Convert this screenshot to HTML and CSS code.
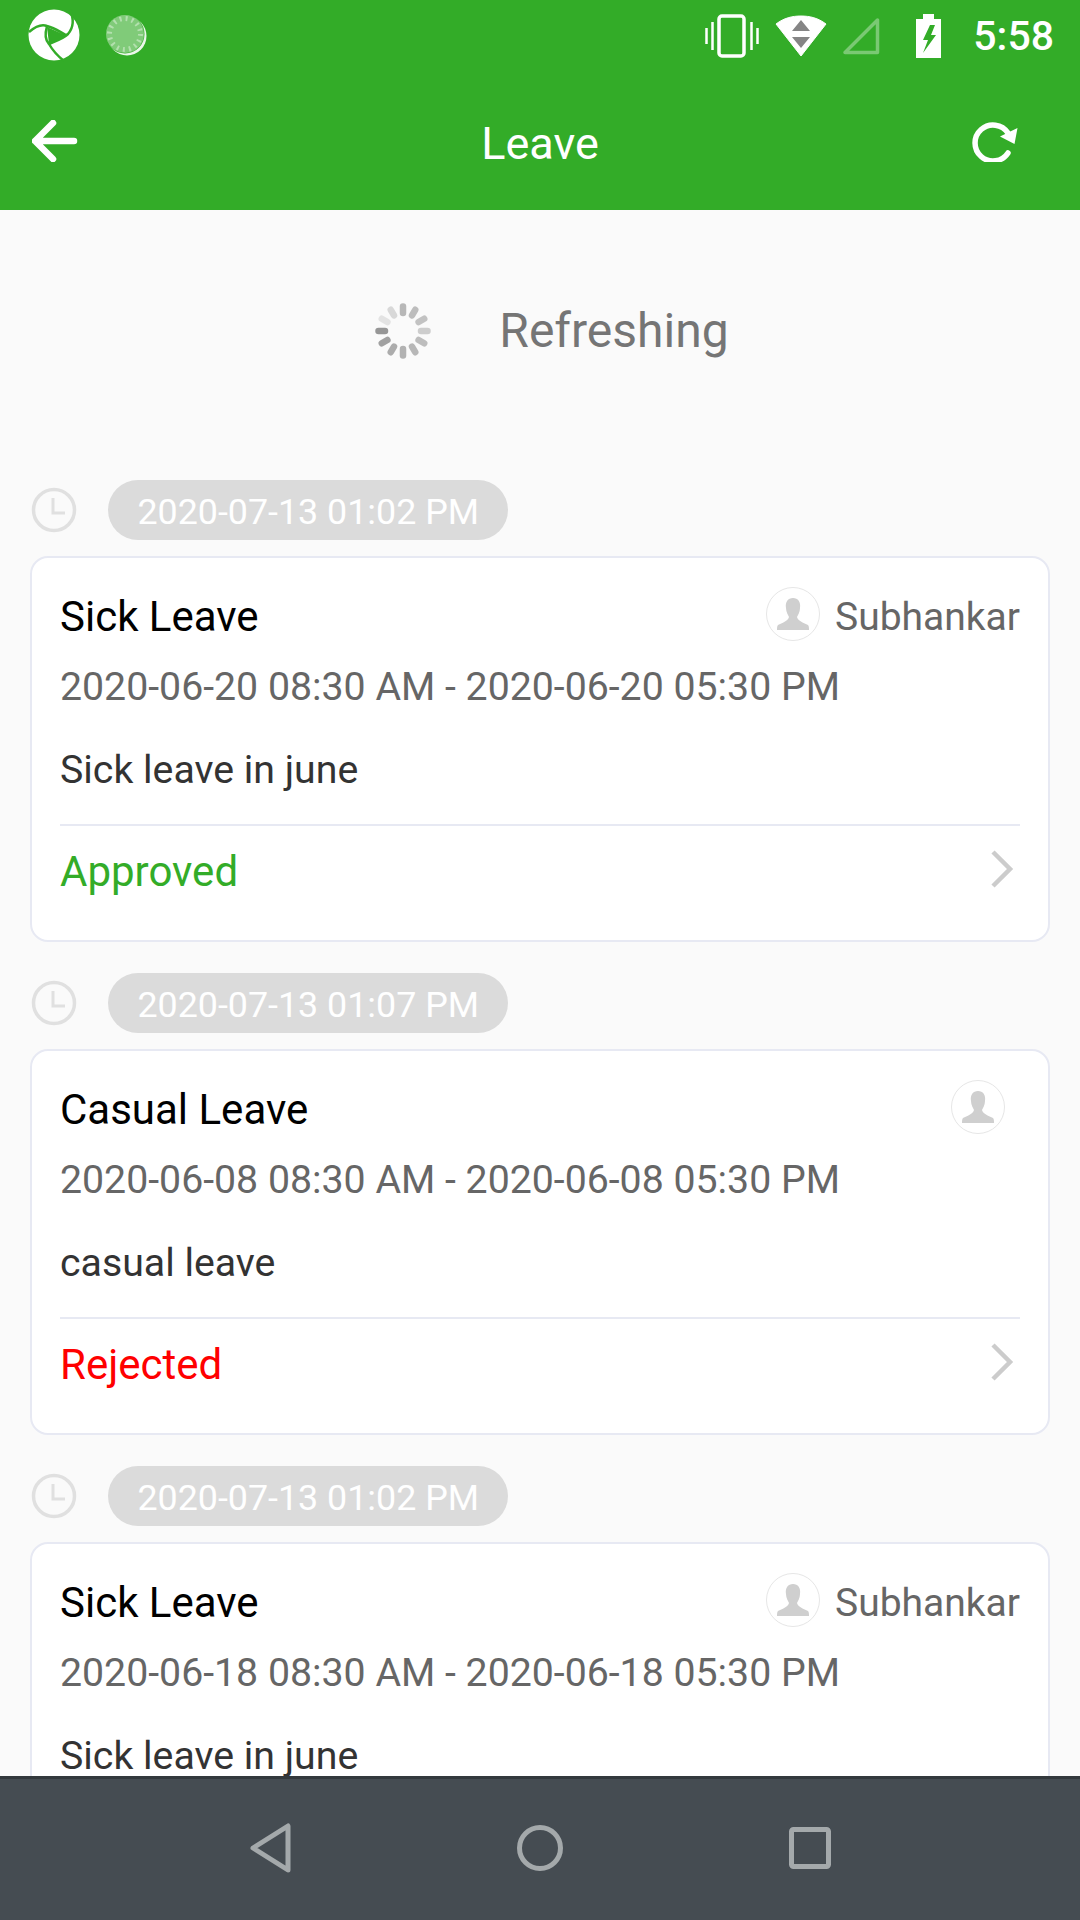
FILE: index.html
```html
<!DOCTYPE html>
<html lang="en">
<head>
<meta charset="utf-8">
<title>Leave</title>
<link rel="stylesheet" href="styles.css">
</head>
<body>
<div class="screen">
  <header class="header">
    <div class="statusbar">
      <svg class="logo" width="54" height="54" viewBox="0 0 54 54"><circle cx="26" cy="26" r="25.5" fill="#fff"/><path d="M1 23C8 17 14 15 19 17C27 19 32 23 38 26M42 1C46 10 46 18 40 25C36 29 30 31 21 35M19 17C17 24 17 31 21 35C25 42 31 48 36 52" fill="none" stroke="#33ac28" stroke-width="2.500"/><path d="M19 18L38 26.500L21 35Z" fill="#33ac28"/></svg>
      <svg class="appicon" width="44" height="44" viewBox="0 0 44 44"><circle cx="23" cy="23" r="19.5" fill="#fff" opacity=".9"/><circle cx="21" cy="21" r="19.5" fill="#33ac28"/><circle cx="21" cy="21" r="19" fill="#fff" opacity=".38"/><circle cx="21" cy="21" r="15.5" fill="none" stroke="#fff" stroke-opacity=".4" stroke-width="5" stroke-dasharray="2 4.1"/></svg>
      <span class="status-spacer"></span>
      <svg class="vibrate" width="54" height="44" viewBox="0 0 54 44"><rect x="14" y="2" width="25" height="40" rx="3" fill="none" stroke="#fff" stroke-width="3.5"/><path d="M1.5 14V30M7.500 8V36M46.500 8V36M52.500 14V30" stroke="#fff" stroke-width="2.500" fill="none"/></svg>
      <svg class="wifi" width="52" height="42" viewBox="0 0 52 42"><path d="M1 9C9 3 17 1 26 1S43 3 51 9L26 41Z" fill="#fff" stroke="#fff" stroke-linejoin="round"/><path d="M26 5L35 16H17ZM17 22H35L26 33Z" fill="#858585"/></svg>
      <svg class="signal" width="38" height="38" viewBox="0 0 38 38"><path d="M3 35.500L35.500 3V35.500Z" fill="none" stroke="#fff" stroke-opacity=".35" stroke-width="3.500" stroke-linejoin="round"/></svg>
      <svg class="battery" width="25" height="44" viewBox="0 0 25 44"><path d="M7 0H18V5H25V44H0V5H7Z" fill="#fff"/><path d="M14 11L7 26H12L7 39L20 21H15L19 11Z" fill="#33ac28"/></svg>
      <span class="clock-time">5:58</span>
    </div>
    <div class="toolbar">
      <svg class="back" width="46" height="42" viewBox="0 0 46 42"><path d="M21 3L3 21L21 39M3 21H42" fill="none" stroke="#fff" stroke-width="6.500" stroke-linecap="round" stroke-linejoin="round"/></svg>
      <h1 class="title">Leave</h1>
      <svg class="reload" width="46" height="42" viewBox="0 0 46 42"><path d="M36 33A18 18 0 1 1 36 13" fill="none" stroke="#fff" stroke-width="5.500" stroke-linecap="round"/><path d="M45.500 8L42.500 24L28 16.500Z" fill="#fff"/></svg>
    </div>
  </header>

  <main class="content">
    <div class="refresh">
      <svg class="spinner" width="60" height="60" viewBox="-30 -30 60 60">
        <g stroke="#8c8c8c" stroke-width="6.500" stroke-linecap="round">
          <line y1="-24.500" y2="-18" opacity=".6"/>
          <line y1="-24.500" y2="-18" opacity=".55" transform="rotate(30)"/>
          <line y1="-24.500" y2="-18" opacity=".5" transform="rotate(60)"/>
          <line y1="-24.500" y2="-18" opacity=".4" transform="rotate(90)"/>
          <line y1="-24.500" y2="-18" opacity=".55" transform="rotate(120)"/>
          <line y1="-24.500" y2="-18" opacity=".6" transform="rotate(150)"/>
          <line y1="-24.500" y2="-18" opacity=".65" transform="rotate(180)"/>
          <line y1="-24.500" y2="-18" opacity=".7" transform="rotate(210)"/>
          <line y1="-24.500" y2="-18" opacity=".8" transform="rotate(240)"/>
          <line y1="-24.500" y2="-18" opacity=".9" transform="rotate(270)"/>
          <line y1="-24.500" y2="-18" opacity=".2" transform="rotate(300)"/>
          <line y1="-24.500" y2="-18" opacity=".3" transform="rotate(330)"/>
        </g>
      </svg>
      <span class="refresh-text">Refreshing</span>
    </div>

    <section class="entry">
      <div class="stamp">
        <svg class="clock" width="46" height="46" viewBox="0 0 46 46"><circle cx="23" cy="23" r="20.500" fill="none" stroke="#e0e0e0" stroke-width="3.500"/><path d="M22 11V26H34" fill="none" stroke="#e0e0e0" stroke-width="3"/></svg>
        <span class="pill">2020-07-13 01:02 PM</span>
      </div>
      <article class="card">
        <div class="card-head">
          <span class="card-title">Sick Leave</span>
          <svg class="avatar" width="54" height="54" viewBox="0 0 54 54"><circle cx="27" cy="27" r="26.500" fill="#fff" stroke="#e6e6e6"/><path d="M27 11C32 11 35 15 34 21C34 25 32 28 31 30C32 34 38 36 42 38C43 39 43 41 43 43H11C11 41 11 39 12 38C16 36 22 34 23 30C22 28 20 25 20 21C19 15 22 11 27 11Z" fill="#cfcfcf"/></svg>
          <span class="person">Subhankar</span>
        </div>
        <div class="card-dates">2020-06-20 08:30 AM - 2020-06-20 05:30 PM</div>
        <div class="card-desc">Sick leave in june</div>
        <div class="card-foot">
          <span class="state approved">Approved</span>
          <svg class="chev" width="24" height="38" viewBox="0 0 24 38"><path d="M3 2L20 19L3 36" fill="none" stroke="#cccccc" stroke-width="4.500"/></svg>
        </div>
      </article>
    </section>

    <section class="entry">
      <div class="stamp">
        <svg class="clock" width="46" height="46" viewBox="0 0 46 46"><circle cx="23" cy="23" r="20.500" fill="none" stroke="#e0e0e0" stroke-width="3.500"/><path d="M22 11V26H34" fill="none" stroke="#e0e0e0" stroke-width="3"/></svg>
        <span class="pill">2020-07-13 01:07 PM</span>
      </div>
      <article class="card">
        <div class="card-head">
          <span class="card-title">Casual Leave</span>
          <svg class="avatar" width="54" height="54" viewBox="0 0 54 54"><circle cx="27" cy="27" r="26.500" fill="#fff" stroke="#e6e6e6"/><path d="M27 11C32 11 35 15 34 21C34 25 32 28 31 30C32 34 38 36 42 38C43 39 43 41 43 43H11C11 41 11 39 12 38C16 36 22 34 23 30C22 28 20 25 20 21C19 15 22 11 27 11Z" fill="#cfcfcf"/></svg>
          <span class="person"></span>
        </div>
        <div class="card-dates">2020-06-08 08:30 AM - 2020-06-08 05:30 PM</div>
        <div class="card-desc">casual leave</div>
        <div class="card-foot">
          <span class="state rejected">Rejected</span>
          <svg class="chev" width="24" height="38" viewBox="0 0 24 38"><path d="M3 2L20 19L3 36" fill="none" stroke="#cccccc" stroke-width="4.500"/></svg>
        </div>
      </article>
    </section>

    <section class="entry">
      <div class="stamp">
        <svg class="clock" width="46" height="46" viewBox="0 0 46 46"><circle cx="23" cy="23" r="20.500" fill="none" stroke="#e0e0e0" stroke-width="3.500"/><path d="M22 11V26H34" fill="none" stroke="#e0e0e0" stroke-width="3"/></svg>
        <span class="pill">2020-07-13 01:02 PM</span>
      </div>
      <article class="card">
        <div class="card-head">
          <span class="card-title">Sick Leave</span>
          <svg class="avatar" width="54" height="54" viewBox="0 0 54 54"><circle cx="27" cy="27" r="26.500" fill="#fff" stroke="#e6e6e6"/><path d="M27 11C32 11 35 15 34 21C34 25 32 28 31 30C32 34 38 36 42 38C43 39 43 41 43 43H11C11 41 11 39 12 38C16 36 22 34 23 30C22 28 20 25 20 21C19 15 22 11 27 11Z" fill="#cfcfcf"/></svg>
          <span class="person">Subhankar</span>
        </div>
        <div class="card-dates">2020-06-18 08:30 AM - 2020-06-18 05:30 PM</div>
        <div class="card-desc">Sick leave in june</div>
      </article>
    </section>
  </main>

  <nav class="navbar">
    <svg width="44" height="50" viewBox="0 0 44 50"><path d="M39 3V47L4 25Z" fill="none" stroke="#a4a9ab" stroke-width="5" stroke-linejoin="round"/></svg>
    <svg width="46" height="46" viewBox="0 0 46 46"><circle cx="23" cy="23" r="20.500" fill="none" stroke="#a4a9ab" stroke-width="5"/></svg>
    <svg width="42" height="42" viewBox="0 0 42 42"><rect x="2.500" y="2.500" width="37" height="37" rx="2" fill="none" stroke="#a4a9ab" stroke-width="5"/></svg>
  </nav>
</div>
</body>
</html>
```

FILE: styles.css
```css
* { box-sizing: border-box; }
html, body { margin: 0; padding: 0; }
body { font-family: Roboto, "Noto Sans", sans-serif; background: #fafafa; }
svg { display: block; flex: none; }

.screen { width: 1080px; height: 1920px; display: flex; flex-direction: column; overflow: hidden; background: #fafafa; }

.header { height: 210px; flex: none; background: #33ac28; color: #fff; display: flex; flex-direction: column; }
.statusbar { height: 72px; flex: none; display: flex; align-items: center; padding: 0 26px 0 28px; }
.appicon { margin-left: 22px; margin-bottom: 2px; }
.status-spacer { flex: 1; }
.vibrate { margin-right: 16px; }
.wifi { margin-right: 15px; }
.signal { margin-right: 36px; }
.battery { margin-right: 32px; }
.clock-time { font-size: 41px; font-weight: 500; line-height: 44px; }

.toolbar { flex: 1; display: grid; grid-template-columns: 1fr auto 1fr; align-items: center; padding: 0 32px; }
.title { margin: 0; font-size: 45px; font-weight: 400; line-height: 50px; padding-top: 6px; }
.reload { justify-self: end; margin-right: 30px; }

.content { flex: 1; min-height: 0; overflow: hidden; padding: 0 30px; }
.refresh { height: 270px; display: flex; align-items: center; justify-content: center; gap: 66px; padding-left: 22px; padding-bottom: 28px; }
.refresh-text { font-size: 48px; color: #757575; line-height: 56px; }

.entry { margin-bottom: 31px; }
.stamp { display: flex; align-items: center; gap: 31px; margin-bottom: 16px; }
.clock { margin-left: 1px; }
.pill { height: 60px; display: flex; align-items: center; padding: 4px 29.5px 0; border-radius: 30px; background: #dbdbdb; color: #fff; font-size: 35.8px; }

.card { height: 386px; background: #fff; border: 2px solid #e7e9f3; border-radius: 18px; padding: 29px 28px 0; display: flex; flex-direction: column; }
.card-head { display: flex; align-items: center; height: 54px; }
.card-title { flex: 1; font-size: 42px; color: #000; line-height: 54px; padding-top: 6px; }
.person { margin-left: 15px; font-size: 39px; color: #666; line-height: 54px; padding-top: 6px; }
.card-dates { margin-top: 23px; font-size: 39.25px; line-height: 46px; color: #666; }
.card-desc { margin-top: 37px; font-size: 39.25px; line-height: 46px; color: #333; }
.card-foot { margin-top: 31px; height: 92px; border-top: 2px solid #e7e9f3; display: flex; align-items: center; justify-content: space-between; }
.state { font-size: 42px; line-height: 50px; padding-top: 2px; }
.approved { color: #33ac28; }
.rejected { color: #f00; }
.chev { margin-right: 6px; margin-bottom: 4px; }

.navbar { height: 144px; flex: none; background: #454c52; border-top: 3px solid #33393d; padding-bottom: 4px; display: flex; align-items: center; justify-content: center; }
.navbar svg:nth-child(1) { margin-right: 224px; }
.navbar svg:nth-child(2) { margin-right: 226px; }
```
